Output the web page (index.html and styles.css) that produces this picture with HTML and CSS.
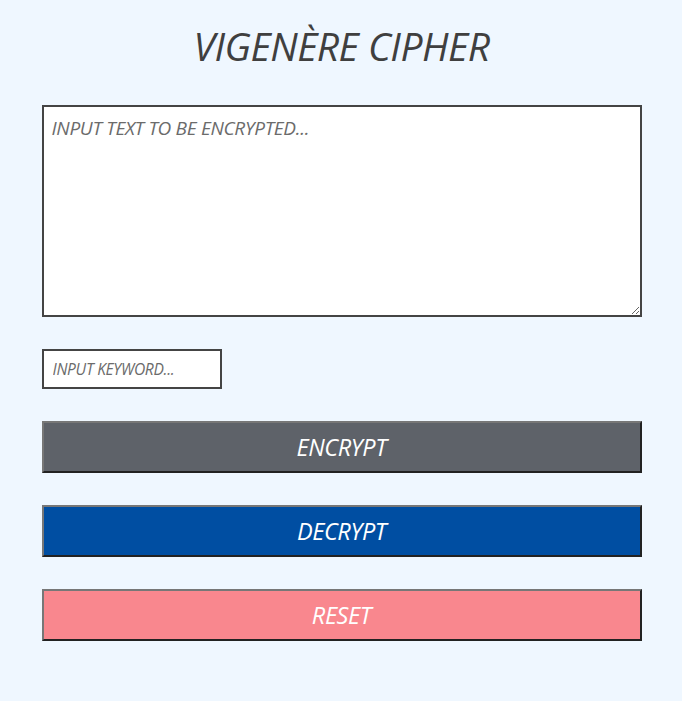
FILE: index.html
```html
<!DOCTYPE html>
<html>
<head>
<meta charset="utf-8">
<link rel="stylesheet" href="styles.css">
</head>
<body>
<main class="app">
  <h1 class="title">VIGENÈRE CIPHER</h1>
  <textarea class="text-input" placeholder="INPUT TEXT TO BE ENCRYPTED..."></textarea>
  <input class="key-input" type="text" placeholder="INPUT KEYWORD...">
  <button class="btn btn-encrypt">ENCRYPT</button>
  <button class="btn btn-decrypt">DECRYPT</button>
  <button class="btn btn-reset">RESET</button>
</main>
</body>
</html>
```
FILE: styles.css
```css
html, body {
  margin: 0;
  padding: 0;
  background: #eff7ff;
}
body {
  font-family: "Open Sans", "DejaVu Sans", sans-serif;
  font-style: italic;
}
.app {
  width: 600px;
  margin: 0 auto;
  padding: 23px 0 60px 1px;
  display: flex;
  flex-direction: column;
  align-items: flex-start;
}
.title {
  align-self: stretch;
  text-align: center;
  margin: 0 0 36px;
  font-size: 39px;
  line-height: 46px;
  font-weight: 500;
  font-style: italic;
  color: #3f3f3f;
  letter-spacing: -0.5px;
}
.text-input {
  box-sizing: border-box;
  width: 600px;
  height: 212px;
  border: 2px solid #444;
  background: #fff;
  padding: 8px 8px;
  font-family: inherit;
  font-style: italic;
  font-size: 19px;
  font-weight: 500;
  color: #333;
  margin: 0 0 32px;
  outline: none;
}
.text-input::placeholder,
.key-input::placeholder {
  color: #6b6b6b;
  letter-spacing: -0.3px;
}
.key-input {
  box-sizing: border-box;
  width: 180px;
  height: 40px;
  border: 2px solid #444;
  background: #fff;
  padding: 0 9px;
  font-family: inherit;
  font-style: italic;
  font-size: 15.6px;
  font-weight: 500;
  color: #333;
  margin: 0 0 32px;
  outline: none;
}
.btn {
  box-sizing: border-box;
  width: 600px;
  height: 52px;
  border-style: solid;
  border-width: 2px;
  border-color: #777 #222 #222 #777;
  font-family: inherit;
  font-style: italic;
  font-weight: 500;
  font-size: 23.5px;
  color: #fff;
  letter-spacing: -0.4px;
  margin: 0 0 32px;
  padding: 0;
}
.btn-encrypt { background: #5e6269; }
.btn-decrypt { background: #004ea2; }
.btn-reset { background: #f9878e; }
```
